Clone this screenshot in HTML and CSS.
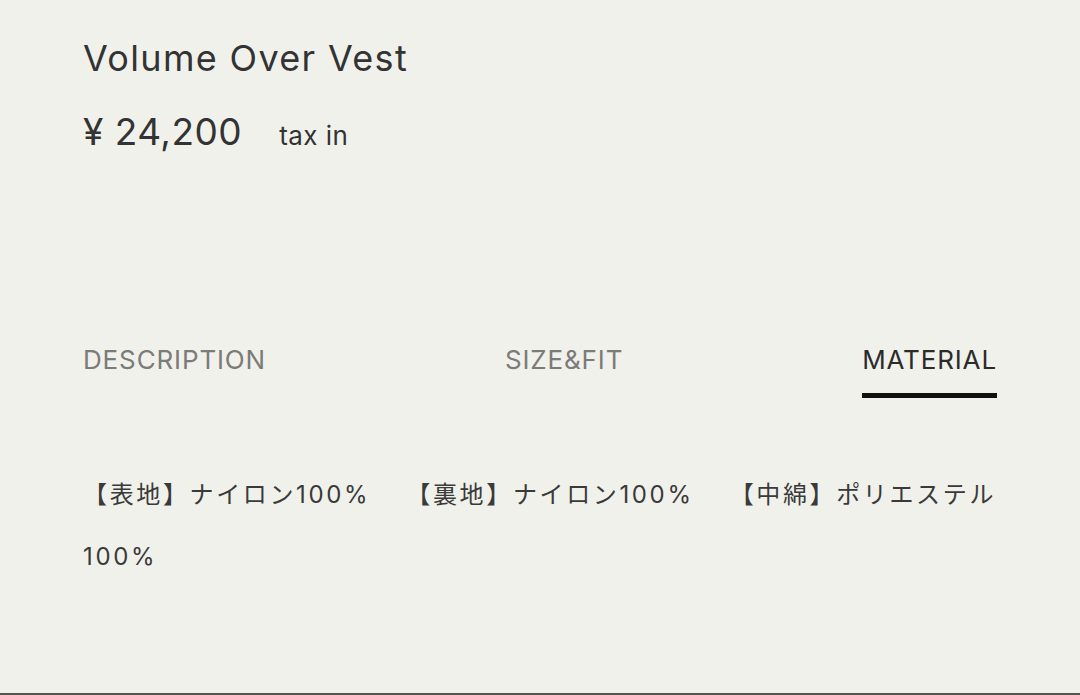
FILE: index.html
```html
<!DOCTYPE html>
<html lang="ja">
<head>
    <meta charset="UTF-8">
    <meta name="viewport" content="width=device-width, initial-scale=1.0">
    <title>Volume Over Vest</title>
    <link rel="stylesheet" href="styles.css">
</head>
<body>
    <div class="product">
        <!-- Title & Price -->
        <h1 class="product-name">Volume Over Vest</h1>
        <div class="product-price">
            <span class="price">¥ 24,200</span>
            <span class="tax">tax in</span>
        </div>

        <!-- Tabs -->
        <ul class="tabs">
            <li class="tab">DESCRIPTION</li>
            <li class="tab">SIZE&amp;FIT</li>
            <li class="tab active">MATERIAL</li>
        </ul>

        <div class="tab-body">
            <p>【表地】ナイロン100%　 【裏地】ナイロン100%　 【中綿】ポリエステル100%</p>
        </div>
    </div>
</body>
</html>
```

FILE: styles.css
```css
/* Base Reset */
body, html {
    margin: 0;
    padding: 0;
    font-family: Inter, "Noto Sans CJK JP", sans-serif;
    background-color: #f1f1ec;
    color: #333;
}
* {
    box-sizing: border-box;
}

body {
    height: 695px;
    border-bottom: 2px solid #55554f;
}

/* Product Wrapper */
.product {
    width: 914px;
    margin-left: 83px;
    padding-top: 36px;
}

.product-name {
    margin: 0;
    font-size: 36px;
    font-weight: 400;
    line-height: 44px;
    letter-spacing: 0.037em;
    color: #333;
}

.product-price {
    margin-top: 30px;
    display: flex;
    align-items: baseline;
    gap: 37px;
    letter-spacing: 0.03em;
}

.price {
    font-size: 37px;
    line-height: 44px;
}

.tax {
    font-size: 26px;
}

/* Tabs */
.tabs {
    list-style: none;
    margin: 190px 0 0;
    padding: 0;
    display: flex;
    justify-content: space-between;
}

.tab {
    font-size: 26px;
    line-height: 32px;
    letter-spacing: 0.033em;
    color: #7b7b78;
    padding-bottom: 17px;
    border-bottom: 5px solid transparent;
}

.tab.active {
    color: #2b2b2b;
    border-bottom-color: #111;
}

/* Tab Content */
.tab-body p {
    width: 940px;
    margin: 66px 0 0;
    font-size: 24px;
    line-height: 62px;
    letter-spacing: 0.11em;
    color: #3a3a3a;
}
```
